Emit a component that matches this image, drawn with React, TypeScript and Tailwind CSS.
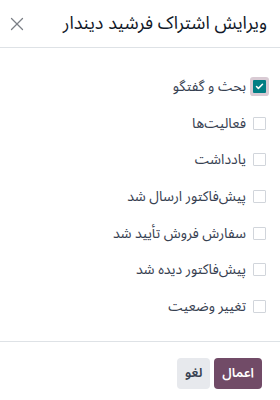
import { X, Check } from 'lucide-react';

const items = [
  { label: 'بحث و گفتگو', checked: true },
  { label: 'فعالیت‌ها', checked: false },
  { label: 'یادداشت', checked: false },
  { label: 'پیش‌فاکتور ارسال شد', checked: false },
  { label: 'سفارش فروش تأیید شد', checked: false },
  { label: 'پیش‌فاکتور دیده شد', checked: false },
  { label: 'تغییر وضعیت', checked: false },
];

export default function App() {
  return (
    <div
      dir="rtl"
      className="w-[280px] h-[400px] bg-white flex flex-col"
      style={{ fontFamily: '"Noto Sans Arabic", "Noto Sans", "DejaVu Sans", sans-serif' }}
    >
      <div className="h-12 shrink-0 flex items-center justify-between pr-[13px] pl-[6px] border-b border-[#dee2e6]">
        <h1 className="text-[18px] text-[#111827]">ویرایش اشتراک فرشید دیندار</h1>
        <button className="text-[#7b7f86]">
          <X size={22} strokeWidth={1.4} />
        </button>
      </div>

      <div className="flex-1 flex flex-col pt-5 pr-[14px]">
        {items.map((item) => (
          <label key={item.label} className="h-[36.7px] flex items-center gap-[7px]">
            {item.checked ? (
              <span className="w-[13px] h-[13px] flex items-center justify-center bg-[#017e84] ring-[3px] ring-[#d9cbd4] rounded-[1px]">
                <Check size={9} strokeWidth={4} className="text-white" />
              </span>
            ) : (
              <span className="w-[13px] h-[13px] border border-[#d1d5db] rounded-[1px] bg-white" />
            )}
            <span className="text-[14px] text-[#374151]">{item.label}</span>
          </label>
        ))}
      </div>

      <div className="h-[59px] shrink-0 border-t border-[#dee2e6] flex items-start pt-4 pr-[18px] gap-1">
        <button className="h-[31px] px-[8px] rounded bg-[#714b67] text-white text-[13px] font-semibold">اعمال</button>
        <button className="h-[31px] px-[8px] rounded bg-[#e7e9ed] text-[#374151] text-[13px] font-semibold">لغو</button>
      </div>
    </div>
  );
}
